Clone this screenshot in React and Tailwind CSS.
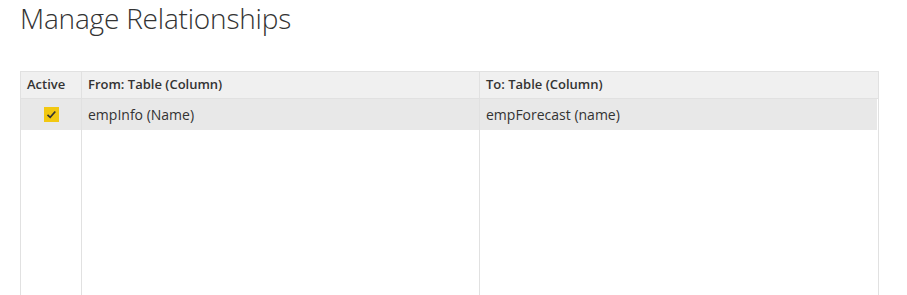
export default function App() {
  return (
    <div className="w-[907px] h-[295px] bg-white overflow-hidden font-['Open_Sans',sans-serif] text-[#333]">
      <h1 className="pl-[20px] pt-[1px] text-[28px] leading-[34px] font-light text-[#333] tracking-[-0.2px]">
        Manage Relationships
      </h1>
      <div className="ml-[20px] mt-[36px] w-[859px] h-[300px] border border-[#e1e1e1] flex">
        <div className="w-[61px] flex flex-col border-r border-[#e1e1e1]">
          <div className="h-[27px] bg-[#f0f0f0] border-b border-[#e1e1e1] px-[6px] flex items-center text-[13px] font-semibold">
            Active
          </div>
          <div className="h-[31px] bg-[#e8e8e8] flex items-center justify-center pl-[1px]">
            <div className="w-[15px] h-[15px] bg-[#f2c811] flex items-center justify-center">
              <svg width="11" height="11" viewBox="0 0 11 11">
                <path d="M1.5 5.8 L4.2 8.3 L9.3 2.5" fill="none" stroke="#333" strokeWidth="1.7" />
              </svg>
            </div>
          </div>
        </div>
        <div className="w-[398px] flex flex-col border-r border-[#e1e1e1]">
          <div className="h-[27px] bg-[#f0f0f0] border-b border-[#e1e1e1] px-[6px] flex items-center text-[13px] font-semibold">
            From: Table (Column)
          </div>
          <div className="h-[31px] bg-[#e8e8e8] px-[6px] flex items-center text-[14px]">
            empInfo (Name)
          </div>
        </div>
        <div className="flex-1 flex flex-col">
          <div className="h-[27px] bg-[#f0f0f0] border-b border-[#e1e1e1] px-[6px] flex items-center text-[13px] font-semibold">
            To: Table (Column)
          </div>
          <div className="h-[31px] bg-[#e8e8e8] px-[6px] flex items-center text-[14px] mr-[1px]">
            empForecast (name)
          </div>
        </div>
      </div>
    </div>
  );
}
